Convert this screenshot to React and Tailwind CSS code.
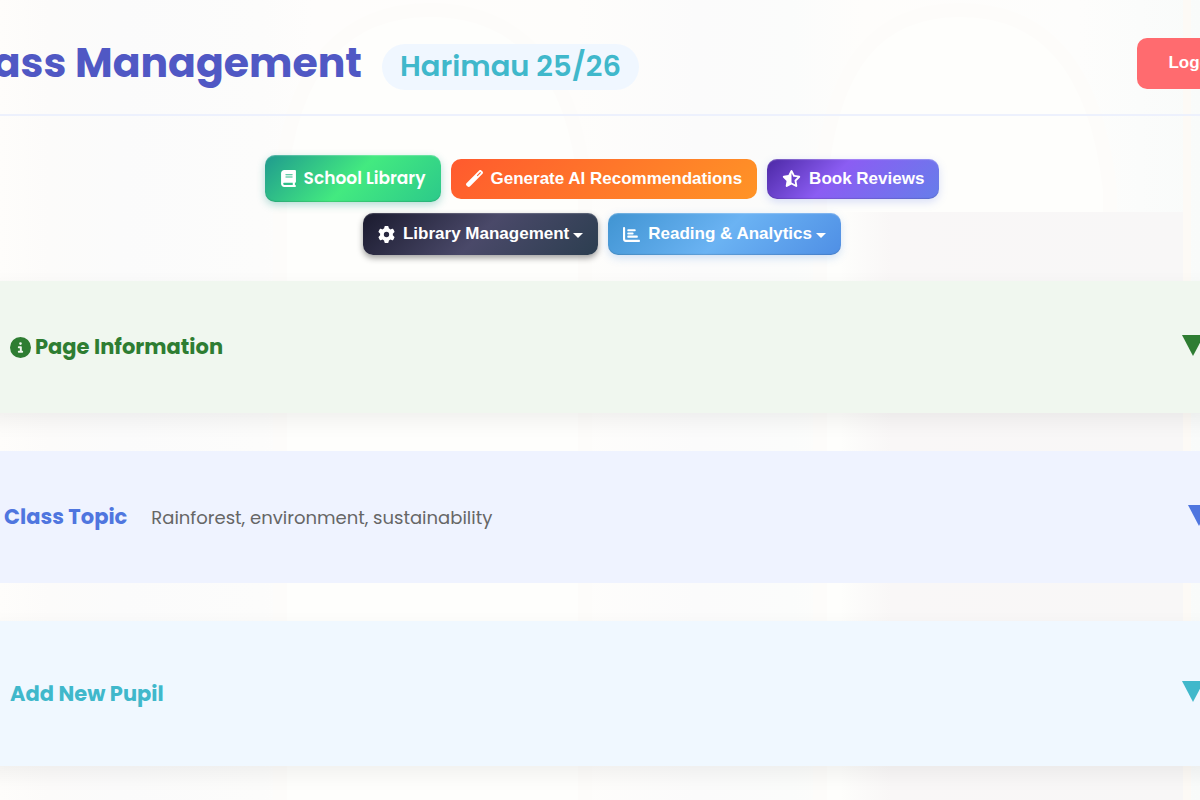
import React from 'react';
import { FaBook, FaWandMagic, FaStarHalfStroke, FaGear, FaChartBar, FaCircleInfo } from 'react-icons/fa6';

const navButton = 'flex items-center rounded-[10px] px-[15px] font-bold text-white text-[17px] whitespace-nowrap';

const Caret = () => (
    <span className="ml-1 mt-0.5 border-x-5 border-t-5 border-x-transparent border-t-white" />
);

const Triangle = () => (
    <svg viewBox="0 0 22 21" className="mb-1 w-[22px] h-[21px] shrink-0" fill="currentColor">
        <path d="M0 0h22L11 21z" />
    </svg>
);

// Washed-out library hall behind the page
const Backdrop = () => (
    <svg className="absolute inset-0 w-full h-full -z-10" viewBox="0 0 1200 800" preserveAspectRatio="none">
        <defs>
            <linearGradient id="wall" x1="0" x2="1" y1="0" y2="0">
                <stop offset="0" stopColor="#fefdfb" />
                <stop offset="0.04" stopColor="#fcfbfa" />
                <stop offset="0.1" stopColor="#fbfbfb" />
                <stop offset="0.22" stopColor="#fcfcfb" />
                <stop offset="0.26" stopColor="#fefdfc" />
                <stop offset="0.48" stopColor="#fefdfb" />
                <stop offset="0.58" stopColor="#fbfbfb" />
                <stop offset="0.66" stopColor="#fbfcfb" />
                <stop offset="0.72" stopColor="#fefdfb" />
                <stop offset="0.9" stopColor="#fdfdfc" />
                <stop offset="1" stopColor="#f9fbfa" />
            </linearGradient>
            <linearGradient id="shelf" x1="0" x2="1" y1="0" y2="0">
                <stop offset="0" stopColor="#f8f6f6" stopOpacity="0" />
                <stop offset="0.15" stopColor="#f9f7f7" />
                <stop offset="1" stopColor="#f8f7f7" />
            </linearGradient>
        </defs>
        <rect width="1200" height="800" fill="url(#wall)" />
        <path d="M280 820V190C290 60 350 10 430 10s145 50 155 180v630z" fill="#fefefc" stroke="#fdfcfa" strokeWidth="14" />
        <path d="M820 820V190C830 60 880 10 960 10s135 50 150 180v630z" fill="#fefefc" stroke="#fdfcfa" strokeWidth="14" />
        <rect x="840" y="212" width="343" height="588" fill="url(#shelf)" />
        <rect x="1183" width="8" height="800" fill="#fdfaf6" />
    </svg>
);

const App = () => {
    return (
        <div className="relative isolate min-h-screen overflow-hidden bg-[#fefdfb] font-['Poppins','Inter',sans-serif]">
            <Backdrop />

            <header className="-mx-[50px] flex h-[116px] items-center justify-between border-b-2 border-[#edf1fd] pt-3">
                <div className="flex items-center gap-5">
                    <h1 className="w-[412px] flex justify-end whitespace-nowrap text-[41px] leading-[52px] font-bold text-[#5058c4]">Class Management</h1>
                    <span className="mt-2 flex h-[46px] items-center rounded-full bg-[#f0f7ff] px-[18px] text-[29px] font-semibold text-[#40b8cb] whitespace-nowrap">Harimau 25/26</span>
                </div>
                <button className="mr-[-7px] h-[51px] rounded-[10px] bg-[#ff6b6f] px-[31px] font-['Liberation_Sans',sans-serif] text-[17px] font-bold text-white">Logout</button>
            </header>

            <nav className="mx-auto mt-[39px] flex max-w-[704px] flex-wrap items-center justify-center gap-x-[10px] gap-y-[11px] pl-1 font-['Liberation_Sans',sans-serif]">
                <button className={`${navButton} h-[47px] gap-[7px] font-['Poppins','Inter',sans-serif] font-semibold bg-[linear-gradient(135deg,#1f9a8e_0%,#43ea80_50%,#2cc98a_100%)] shadow-[0_3px_8px_#1f9a8e55,inset_0_1px_1px_#ffffff40,inset_0_-1px_1px_#00000020]`}>
                    <FaBook /> School Library
                </button>
                <button className={`${navButton} h-10 gap-2 bg-[linear-gradient(135deg,#ff5a2e_0%,#ff9426_100%)]`}>
                    <FaWandMagic /> Generate AI Recommendations
                </button>
                <button className={`${navButton} h-10 gap-2 bg-[linear-gradient(135deg,#4c28a5_0%,#8b5df3_40%,#667eea_100%)] shadow-[0_3px_8px_#667eea40,inset_0_1px_1px_#ffffff40,inset_0_-1px_1px_#00000020]`}>
                    <FaStarHalfStroke size={19} /> Book Reviews
                </button>
                <button className={`${navButton} h-[42px] gap-2 bg-[linear-gradient(135deg,#1a1a2e_0%,#4a4969_50%,#2c3e50_100%)] shadow-[0_3px_6px_#00000060,inset_0_1px_1px_#ffffff30]`}>
                    <FaGear /> <span className="flex items-center">Library Management <Caret /></span>
                </button>
                <button className={`${navButton} h-[42px] gap-2 bg-[linear-gradient(135deg,#4094d2_0%,#6bb3f3_50%,#4f8fe5_100%)] shadow-[0_3px_8px_#4f8fe540,inset_0_1px_1px_#ffffff40,inset_0_-1px_1px_#00000020]`}>
                    <FaChartBar /> <span className="flex items-center">Reading &amp; Analytics <Caret /></span>
                </button>
            </nav>

            <main className="-mx-5 mt-[26px] flex flex-col gap-[38px] pb-[34px]">
                <section className="bg-[#f0f7ef] shadow-[0_8px_20px_#0000000f]">
                    <button className="flex h-[132px] w-full items-center justify-between pl-[30px] pr-4 text-[#2e7d32]">
                        <span className="flex items-center gap-1 text-[21px] font-bold">
                            <FaCircleInfo /> Page Information
                        </span>
                        <Triangle />
                    </button>
                </section>

                <section className="bg-[#eff3ff]">
                    <button className="flex h-[132px] w-full items-center justify-between pl-6 pr-[10px] text-[#4f76df]">
                        <span className="flex items-baseline gap-6">
                            <span className="text-[21px] font-bold">Class Topic</span>
                            <span className="text-[18px] text-[#666]">Rainforest, environment, sustainability</span>
                        </span>
                        <Triangle />
                    </button>
                </section>

                <section className="bg-[#f0f8ff] shadow-[0_8px_20px_#0000000f]">
                    <button className="flex h-[145px] w-full items-center justify-between pl-[30px] pr-4 text-[#40b8cb]">
                        <span className="text-[21px] font-bold">Add New Pupil</span>
                        <Triangle />
                    </button>
                </section>
            </main>
        </div>
    );
};

export default App;
